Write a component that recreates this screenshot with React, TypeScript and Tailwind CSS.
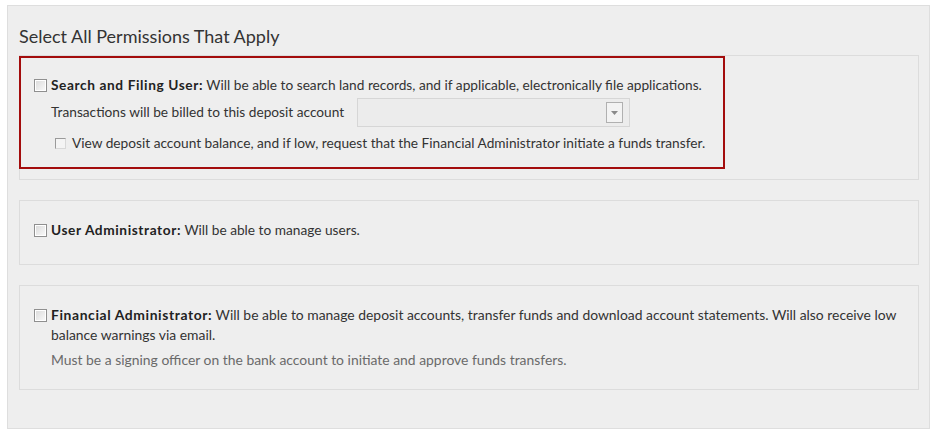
import React from 'react';

const font = { fontFamily: 'Lato, "Liberation Sans", sans-serif' };

function Box({ small }: { small?: boolean }) {
  if (small) {
    return (
      <span className="inline-block w-[11px] h-[11px] border border-[#9a9a9a] border-r-[#d8d8d8] border-b-[#d8d8d8] bg-[#f4f4f4] shrink-0" />
    );
  }
  return (
    <span className="inline-flex items-center justify-center w-[13px] h-[13px] border border-[#8f8f8f] bg-white shrink-0">
      <span className="w-[9px] h-[9px] bg-gradient-to-br from-[#dcdcdc] to-[#f8f8f8]" />
    </span>
  );
}

function Label({ children }: { children: React.ReactNode }) {
  return <b className="text-[#222] tracking-[0.6px]">{children}</b>;
}

export default function App() {
  return (
    <div className="bg-white w-[938px] h-[434px] pt-[5px] pl-[7px]" style={font}>
      <div className="w-[923px] h-[424px] bg-[#eeeeee] border border-[#dedede] px-[11px]">
        <h2 className="text-[18px] text-[#333] leading-[24px] pt-[18px] pb-[7px]">
          Select All Permissions That Apply
        </h2>

        {/* search and filing */}
        <div className="border border-[#dcdcdc] h-[125px] w-[900px]">
          <div className="-ml-px w-[706px] border-2 border-[#a30c0c] pt-[17px] pb-[14px] pl-[13px] text-[13.7px] text-[#333] whitespace-nowrap">
            <div className="flex items-center h-[20px]">
              <Box />
              <span className="ml-[4px]">
                <Label>Search and Filing User:</Label> Will be able to search land records, and if applicable, electronically file applications.
              </span>
            </div>
            <div className="flex items-center mt-[3px] pl-[17px]">
              <span className="w-[306px]">Transactions will be billed to this deposit account</span>
              <div className="w-[273px] h-[29px] border border-[#d6d6d6] bg-[#ececec] flex items-center justify-end pr-[6px]">
                <div className="w-[17px] h-[21px] border border-[#b0b0b0] bg-[#f3f3f3] flex items-center justify-center">
                  <svg width="7" height="4" viewBox="0 0 7 4">
                    <path d="M0 0h7L3.5 4z" fill="#8a8a8a" />
                  </svg>
                </div>
              </div>
            </div>
            <div className="flex items-center h-[20px] mt-[6px] pl-[21px]">
              <Box small />
              <span className="ml-[6px]">
                View deposit account balance, and if low, request that the Financial Administrator initiate a funds transfer.
              </span>
            </div>
          </div>
        </div>

        {/* user admin */}
        <div className="border border-[#dcdcdc] w-[900px] h-[65px] mt-[20px] pt-[19px] pl-[14px] text-[13.7px] text-[#333]">
          <div className="flex items-center h-[20px]">
            <Box />
            <span className="ml-[4px]">
              <Label>User Administrator:</Label> Will be able to manage users.
            </span>
          </div>
        </div>

        {/* financial admin */}
        <div className="border border-[#dcdcdc] w-[900px] h-[105px] mt-[20px] pt-[19px] pl-[14px] pr-[12px] text-[13.9px] text-[#333]">
          <div className="flex items-start">
            <span className="flex mt-[4px]"><Box /></span>
            <p className="ml-[4px] leading-[20px]">
              <Label>Financial Administrator:</Label> Will be able to manage deposit accounts, transfer funds and download account statements. Will also receive low balance warnings via email.
            </p>
          </div>
          <p className="pl-[17px] mt-[5px] leading-[20px] text-[#6a6a6a]">
            Must be a signing officer on the bank account to initiate and approve funds transfers.
          </p>
        </div>
      </div>
    </div>
  );
}
